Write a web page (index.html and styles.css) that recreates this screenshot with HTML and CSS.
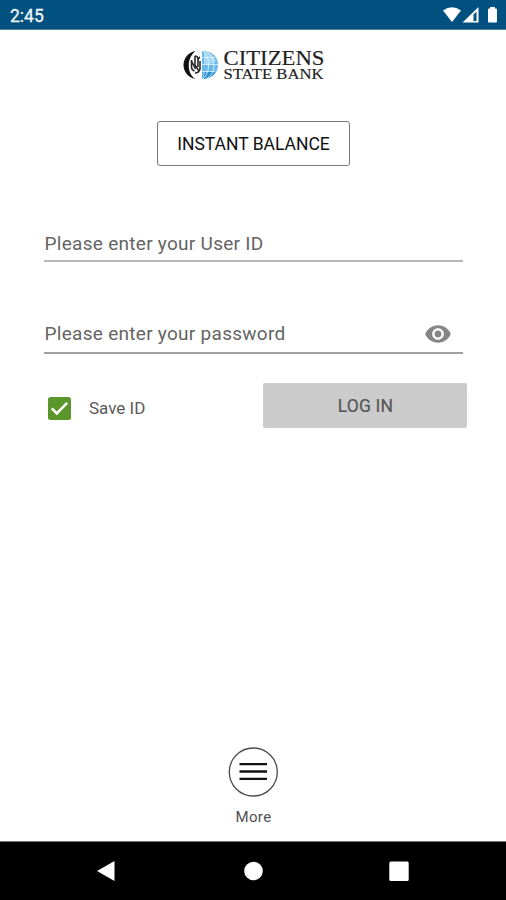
FILE: index.html
```html
<!DOCTYPE html>
<html lang="en">
<head>
<meta charset="utf-8">
<title>Citizens State Bank</title>
<link rel="stylesheet" href="styles.css">
</head>
<body>
<div class="app">
  <header class="status">
    <span class="time">2:45</span>
    <svg class="status-icons" width="56" height="18" viewBox="0 0 56 18" fill="#fff">
      <path d="M0 4.500Q9-2 18 4.500L9 16Z"/>
      <path fill-rule="evenodd" d="M19.500 16.500L35.500 1V16.500ZM30.500 8.500V15H33.500V5.500Z"/>
      <path d="M47 1h5v1.500h1q1 0 1 1v12q0 1-1 1h-7q-1 0-1-1v-12q0-1 1-1h1z"/>
    </svg>
  </header>
  <main>
    <svg class="logo" width="144" height="40" viewBox="0 -4 144 40">
      <path d="M13.500 4C-2.500 7-2.500 29 13.500 32C4.500 26 4.500 11 13.500 4Z" fill="#111"/>
      <g fill="none" stroke="#2b2b2b" stroke-width="1.600">
        <path d="M9.500 13v7q0 3 3 4M9.500 14l4 8M13 9v9M13 9q3 0 3 3v8M18 10q-2 1-2 4M18 14v8q-1 4-5 4M13 18l4 6"/>
      </g>
      <path d="M20 4C30 3.500 36 10 36 18S30 32.500 20 32Z" fill="#6ab9e8"/>
      <path d="M22 5q8 0 12 9q-6 5-12 3Z" fill="#a3d7f3"/>
      <path d="M24 24q5-1 9 1q-4 6-11 7v-3z" fill="#3290cb"/>
      <path d="M20 10.500h13M20 17.500h16M20 24.500h13M21 4q5.500 5 5.500 14T21 32M24 4q8 4 8 14t-8 14" fill="none" stroke="#e5f5fc" stroke-width=".8"/>
      <g class="wordmark">
        <text x="41.500" y="18" font-size="20.500" textLength="101" lengthAdjust="spacingAndGlyphs">CITIZENS</text>
        <text x="41.500" y="32.400" font-size="14" textLength="100" lengthAdjust="spacingAndGlyphs">STATE BANK</text>
      </g>
    </svg>
    <button class="instant">INSTANT BALANCE</button>
    <form>
      <div class="field user"><span>Please enter your User ID</span></div>
      <div class="field pass"><span>Please enter your password</span>
        <svg class="eye" width="28" height="28" viewBox="0 0 24 24" fill="#858585"><path d="M12 4.500C7 4.500 2.730 7.610 1 12c1.730 4.390 6 7.500 11 7.500s9.270-3.110 11-7.500c-1.730-4.390-6-7.500-11-7.500zM12 17c-2.760 0-5-2.240-5-5s2.240-5 5-5 5 2.240 5 5-2.240 5-5 5zm0-8c-1.660 0-3 1.340-3 3s1.340 3 3 3 3-1.340 3-3-1.340-3-3-3z"/></svg>
      </div>
      <div class="actions">
        <svg class="check" width="23" height="23" viewBox="0 0 23 23"><rect width="23" height="23" rx="2.500" fill="#5b962b"/><path d="M3.800 11.300L8.800 16.300L19.200 5.800" fill="none" stroke="#fff" stroke-width="2.600"/></svg>
        <span class="save">Save ID</span>
        <button class="login" type="button">LOG IN</button>
      </div>
    </form>
    <div class="more">
      <svg width="50" height="50" viewBox="0 0 50 50" fill="none"><circle cx="25.300" cy="25" r="24" stroke="#4a4a4a" stroke-width="1.300"/><path d="M11.500 17.100h27.500M11.500 24.500h27.500M11.500 31.900h27.500" stroke="#111" stroke-width="2.400"/></svg>
      <span>More</span>
    </div>
  </main>
  <nav>
    <svg width="20" height="22" viewBox="0 0 20 22"><path d="M1 11L18.500 1V21Z" fill="#fff"/></svg>
    <svg width="20" height="22" viewBox="0 0 20 22"><circle cx="10.500" cy="11" r="9.300" fill="#fff"/></svg>
    <svg width="20" height="22" viewBox="0 0 20 22"><rect x=".3" y="1.500" width="19.400" height="19.400" rx="1.500" fill="#fff"/></svg>
  </nav>
</div>
</body>
</html>
```
FILE: styles.css
```css
* { box-sizing: border-box; }
body { margin: 0; font-family: Roboto, "Liberation Sans", sans-serif; background: #fff; }
.app { height: 900px; display: flex; flex-direction: column; overflow: hidden; }
.status { height: 30px; background: #00517f; border-bottom: 1px solid #497f9e; display: flex; justify-content: space-between; align-items: flex-start; padding: 6px 7px 0 10px; }
.time { color: #f2f7fa; font-size: 17.5px; line-height: 20px; -webkit-text-stroke: .3px #f2f7fa; }
.status-icons { display: block; }
main { flex: 1; display: flex; flex-direction: column; align-items: center; }
.logo { display: block; margin-top: 13px; margin-left: 1px; }
.wordmark { font-family: "Liberation Serif", serif; fill: #222; stroke: #222; stroke-width: .15; }
button { font-family: inherit; padding: 0; }
.instant { width: 193px; height: 45px; margin-top: 38px; background: #fff; border: 1.5px solid #777; border-radius: 3px; font-size: 17.5px; font-weight: 400; color: #111; padding-left: 1px; }
form { width: 100%; padding: 0 39px 0 44px; }
.field { display: flex; align-items: center; justify-content: space-between; width: 419px; padding-left: .6px; color: #646464; font-size: 19px; letter-spacing: .28px; }
.user { height: 36px; margin-top: 60px; padding-top: 1px; border-bottom: 2px solid #b8b8b8; }
.pass { height: 40px; margin-top: 52px; padding-right: 11px; border-bottom: 2px solid #a0a0a0; }
.eye { margin-top: 2px; }
.actions { display: flex; align-items: center; height: 45px; margin-top: 29px; }
.check { margin: 5px 18px 0 4px; }
.save { margin-top: 5px; width: 174px; font-size: 17px; color: #5a5a5a; }
.login { width: 204px; height: 45px; border: 0; border-radius: 2px; background: #cbcbcb; color: #555; font-size: 17.5px; font-weight: 400; letter-spacing: .15px; -webkit-text-stroke: .2px #555; padding-left: 1px; }
.more { margin-top: auto; margin-bottom: 14px; display: flex; flex-direction: column; align-items: center; font-size: 15px; line-height: 20px; letter-spacing: .4px; color: #505050; }
.more span { margin-top: 10px; padding-left: 1px; }
nav { height: 59px; background: #000; border-top: 1px solid #777; display: flex; justify-content: space-between; padding: 18px 97px 0 96px; }
```
